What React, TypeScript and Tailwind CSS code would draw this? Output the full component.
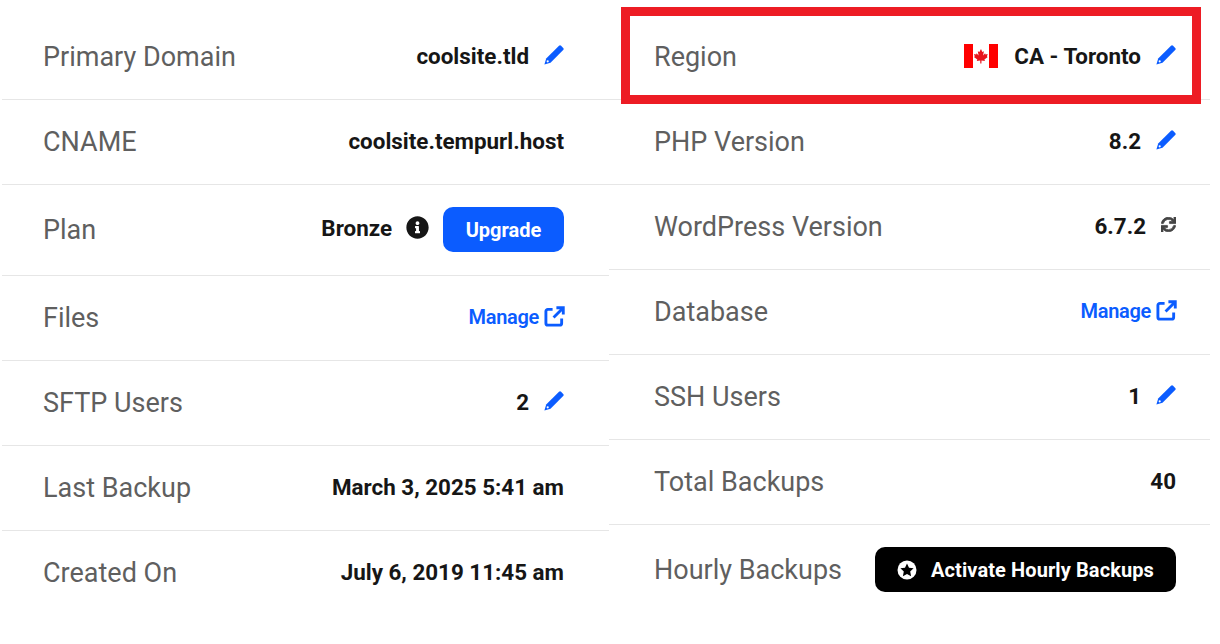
import { ReactNode } from "react";
import { FaInfoCircle, FaSync } from "react-icons/fa";

function Pencil() {
  return (
    <svg viewBox="0 0 20 20" className="mb-[2px] ml-[15px] h-[20px] w-[20px] shrink-0 text-[#0b5cff]">
      <path d="M15 .8a1.5 1.5 0 0 1 2.1 0l2.1 2.1a1.5 1.5 0 0 1 0 2.1L6.5 17.8.4 19.6l1.8-6.1z" fill="currentColor" />
      <circle cx="3.7" cy="16.3" r="1.1" fill="#fff" />
    </svg>
  );
}

function ManageLink() {
  return (
    <span className="-mr-px flex items-center text-[20px] font-semibold leading-none tracking-[-0.3px] text-[#0b5cff]">
      Manage
      <svg viewBox="0 0 22 22" className="mb-[1px] ml-[5px] h-[21px] w-[21px]" fill="none" stroke="currentColor" strokeWidth="3">
        <path d="M9 3.5H4a2 2 0 0 0-2 2V18a2 2 0 0 0 2 2h12.5a2 2 0 0 0 2-2v-5" />
        <path d="M13 1.8h7.2V9M20 2l-10 10" />
      </svg>
    </span>
  );
}

function CanadaFlag() {
  return (
    <svg viewBox="0 0 34 24" className="mr-[16px] h-[24px] w-[34px]">
      <rect width="34" height="24" fill="#fff" />
      <rect width="9" height="24" fill="#f00" />
      <rect x="25" width="9" height="24" fill="#f00" />
      <path
        d="M17 5l-1.6 3-1.6-.8.8 4.2-2-2.2-.4 1.2-2.2-.4.8 2.4-.9.5 3.4 2.7-.5 1.5 3.4-.5.1 3h1.1l.1-3 3.4.5-.5-1.5 3.4-2.7-.9-.5.8-2.4-2.2.4-.4-1.2-2 2.2.8-4.2-1.6.8z"
        fill="#e8141c"
      />
    </svg>
  );
}

function Row({ label, children, last, tall }: { label: string; children: ReactNode; last?: boolean; tall?: boolean }) {
  return (
    <div
      className={`flex items-center justify-between border-b ${tall ? "h-[91px] pb-[1px]" : "h-[85px]"} ${last ? "border-transparent" : "border-[#e6e6e6]"}`}
    >
      <span className="text-[27px] leading-[38px] text-[#5f5f5f]">{label}</span>
      <div className="flex items-center pb-[2px] text-[22.4px] font-bold leading-[37px] text-[#161616]">{children}</div>
    </div>
  );
}

export default function App() {
  return (
    <div className="relative h-[644px] w-[1220px] overflow-hidden bg-white font-['Roboto',sans-serif]">
      <div className="flex pt-[15px]">
        <div className="ml-[2px] w-[607px]">
          <div className="[&>div]:pl-[41px] [&>div]:pr-[45px]">
            <Row label="Primary Domain">
              coolsite.tld
              <Pencil />
            </Row>
            <Row label="CNAME">coolsite.tempurl.host</Row>
            <Row label="Plan" tall>
              Bronze
              <FaInfoCircle className="mb-[3px] ml-[14px] h-[23px] w-[23px] text-[#161616]" />
              <button className="-mb-[2px] ml-[14px] h-[45px] w-[121px] rounded-[10px] bg-[#0b5cff] pt-px text-[20px] font-bold text-white">
                Upgrade
              </button>
            </Row>
            <Row label="Files">
              <ManageLink />
            </Row>
            <Row label="SFTP Users">
              2
              <Pencil />
            </Row>
            <Row label="Last Backup">March 3, 2025 5:41 am</Row>
            <Row label="Created On" last>
              July 6, 2019 11:45 am
            </Row>
          </div>
        </div>
        <div className="w-[601px]">
          <div className="[&>div]:pl-[45px] [&>div]:pr-[34px]">
            <Row label="Region">
              <CanadaFlag />
              CA - Toronto
              <Pencil />
            </Row>
            <Row label="PHP Version">
              8.2
              <Pencil />
            </Row>
            <Row label="WordPress Version">
              6.7.2
              <FaSync className="mb-[3px] ml-[15px] h-[15px] w-[15px] text-[#444]" stroke="currentColor" strokeWidth={26} />
            </Row>
            <Row label="Database">
              <ManageLink />
            </Row>
            <Row label="SSH Users">
              1
              <Pencil />
            </Row>
            <Row label="Total Backups">40</Row>
            <Row label="Hourly Backups" last tall>
              <button className="-mb-[2px] flex h-[45px] w-[301px] items-center justify-center rounded-[10px] bg-black pt-px text-[20px] font-bold tracking-[0.1px] text-white">
                <svg viewBox="0 0 20 20" className="mr-[14px] h-[20px] w-[20px]">
                  <circle cx="10" cy="10" r="9.5" fill="#fff" />
                  <path d="M10 3.4l2 4.3 4.6.6-3.4 3.2.9 4.7-4.1-2.3-4.1 2.3.9-4.7-3.4-3.2 4.6-.6z" fill="#000" />
                </svg>
                Activate Hourly Backups
              </button>
            </Row>
          </div>
        </div>
      </div>
      <div className="absolute left-[621px] top-[7px] h-[97px] w-[580px] border-[9px] border-[#ed1c24]" />
    </div>
  );
}
